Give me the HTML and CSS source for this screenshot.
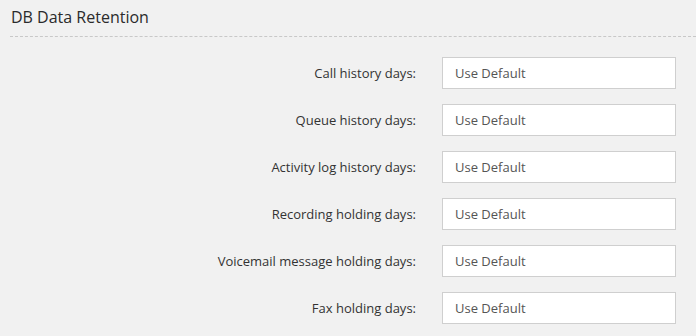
FILE: index.html
```html
<!DOCTYPE html>
<html>
    <head>
        <meta charset="UTF-8">
        <link rel="stylesheet" href="styles.css">
    </head>
    <body>
        <div class="panel">
            <h2 class="panel-title">DB Data Retention</h2>
            <div class="form-rows">
                <label class="field-label" for="call">Call history days:</label>
                <input class="field-input" id="call" type="text" placeholder="Use Default">

                <label class="field-label" for="queue">Queue history days:</label>
                <input class="field-input" id="queue" type="text" placeholder="Use Default">

                <label class="field-label" for="activity">Activity log history days:</label>
                <input class="field-input" id="activity" type="text" placeholder="Use Default">

                <label class="field-label" for="recording">Recording holding days:</label>
                <input class="field-input" id="recording" type="text" placeholder="Use Default">

                <label class="field-label" for="voicemail">Voicemail message holding days:</label>
                <input class="field-input" id="voicemail" type="text" placeholder="Use Default">

                <label class="field-label" for="fax">Fax holding days:</label>
                <input class="field-input" id="fax" type="text" placeholder="Use Default">
            </div>
        </div>
    </body>
</html>
```

FILE: styles.css
```css
body {
    font-family: 'Open Sans', sans-serif;
    background-color: #f1f1f1;
    color: #333;
    margin: 0;
}

.panel {
    padding: 0 0 0 10px;
}

.panel-title {
    margin: 0;
    padding: 6px 0 8px 1px;
    font-size: 16px;
    font-weight: normal;
    line-height: 22px;
    color: #2b2b2b;
    border-bottom: 1px dashed #c8c8c8;
}

.form-rows {
    display: grid;
    grid-template-columns: 406px 234px;
    column-gap: 26px;
    row-gap: 15px;
    align-items: center;
    padding-top: 20px;
}

.field-label {
    text-align: right;
    font-size: 13px;
    color: #333;
}

.field-input {
    box-sizing: border-box;
    width: 234px;
    height: 32px;
    margin: 0;
    padding: 0 12px;
    border: 1px solid #cfcfcf;
    background: #fff;
    font-family: 'Open Sans', sans-serif;
    font-size: 13px;
    color: #555;
    outline: none;
}

.field-input::placeholder {
    color: #555;
    opacity: 1;
}
```
